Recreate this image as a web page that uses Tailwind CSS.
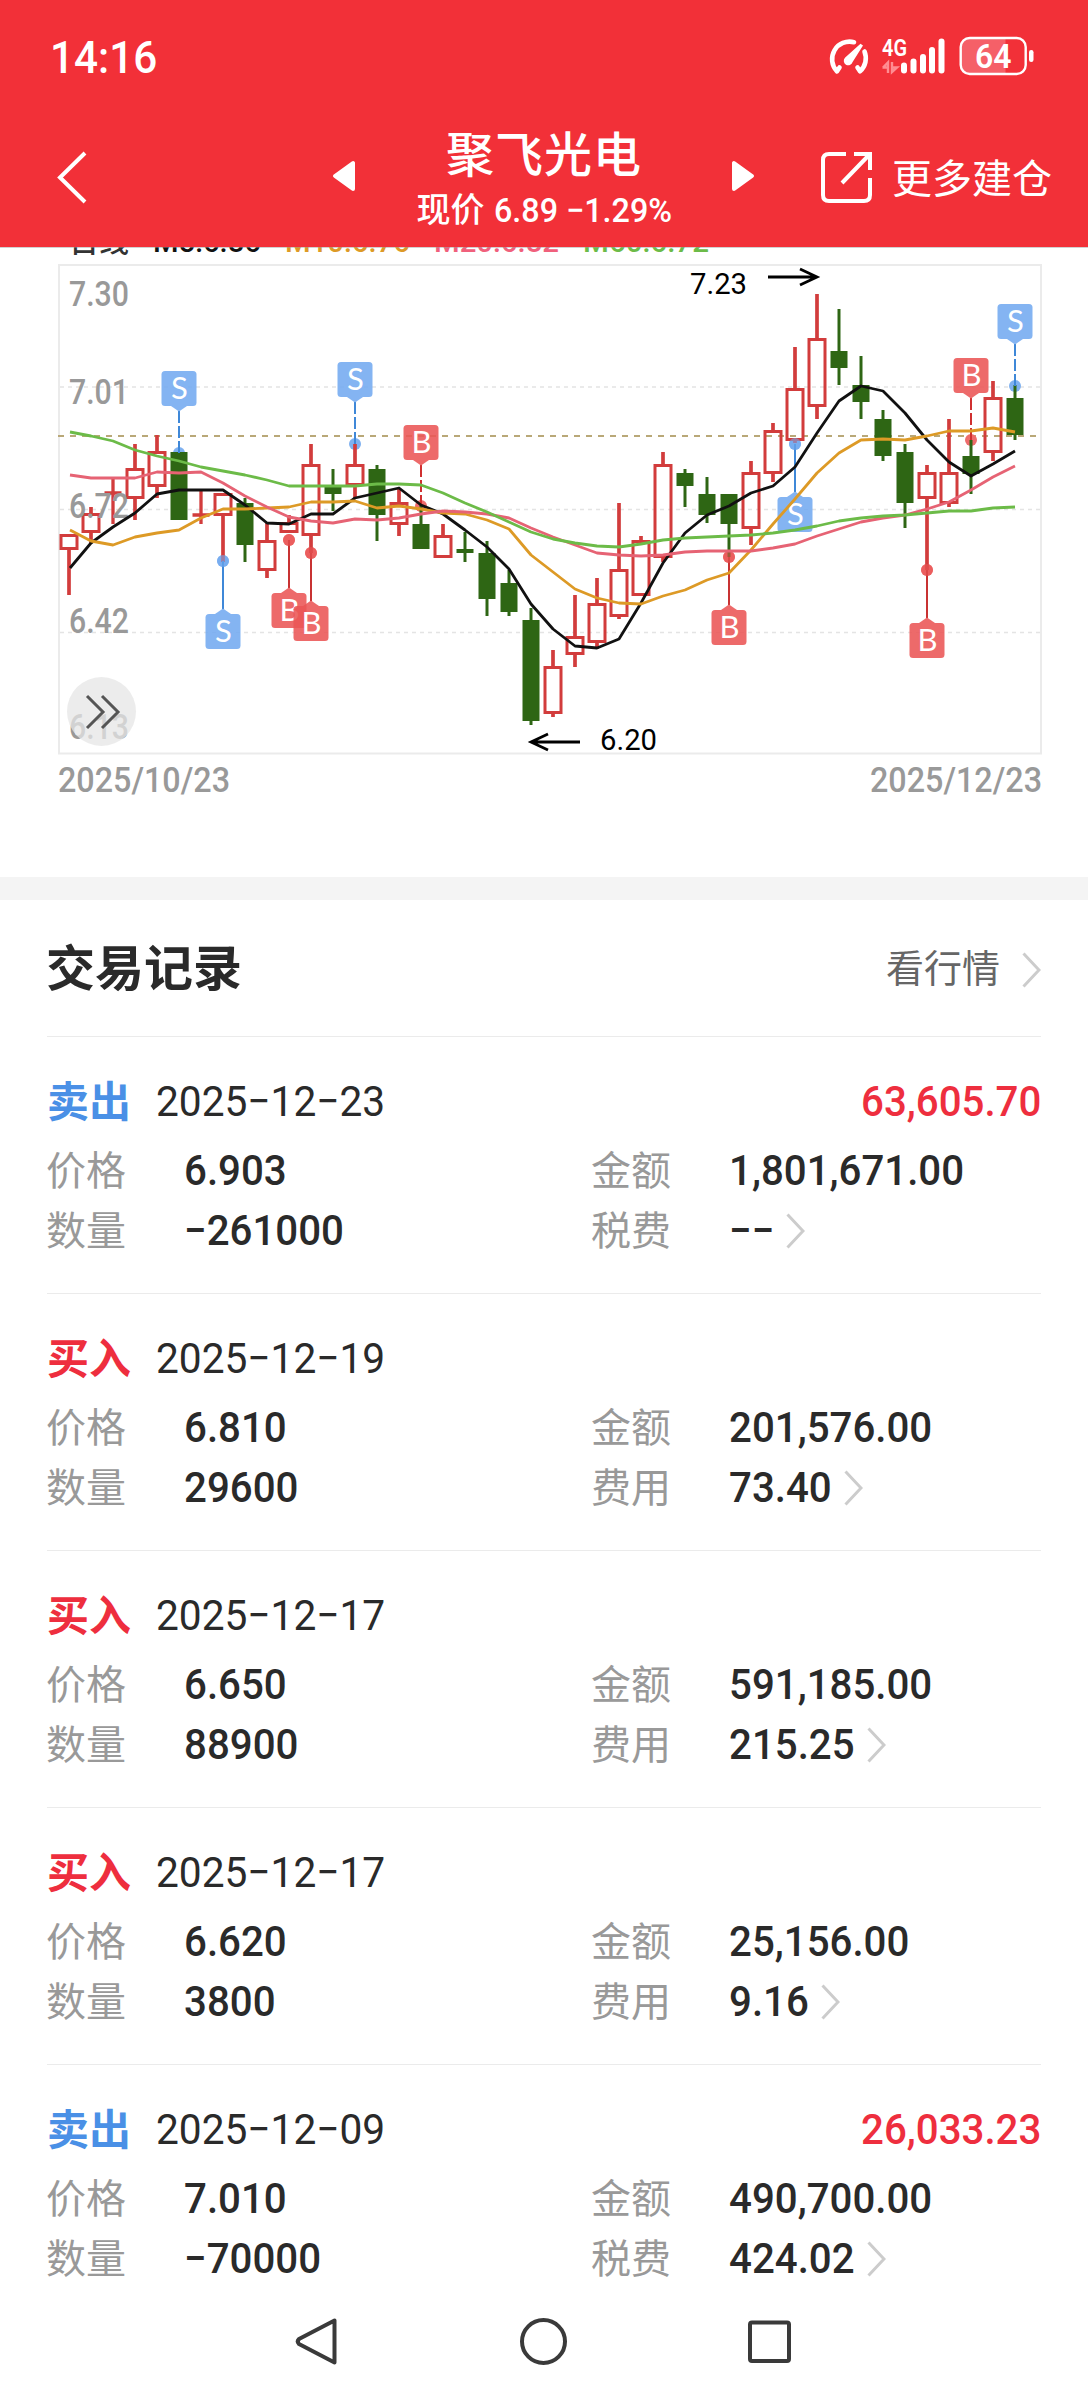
<!DOCTYPE html>
<html lang="zh-CN">
<head>
<meta charset="utf-8">
<title>聚飞光电</title>
<script src="https://cdn.jsdelivr.net/npm/@tailwindcss/browser@4"></script>
</head>
<body class="w-[1088px] h-[2400px] overflow-hidden bg-white text-[#2a2a2a] font-['Roboto','Noto_Sans_CJK_SC',sans-serif] flex flex-col">

<header class="h-[247px] shrink-0 bg-[#f23038] text-white flex flex-col">
  <div class="h-[114px] flex items-center justify-between pl-[50px] pr-[53px]">
    <span class="text-[45px] leading-none font-medium scale-x-[.94] origin-left">14:16</span>
    <svg class="w-[208px] h-[46px]" viewBox="827 34 208 46" fill="none">
      <g stroke="#fff" stroke-width="4.600" stroke-linecap="round" stroke-linejoin="round">
        <path d="M854 42.200A17.500 17.500 0 0 0 837 71.300L839.500 67.500"/>
        <path d="M864.500 51.500A17.500 17.500 0 0 1 860 71.300L857.500 67.500"/>
      </g>
      <path d="M863 45.500 852.600 62A4.500 4.500 0 1 1 845.200 57.500L860.500 43.800Z" fill="#fff"/>
      <text x="882" y="56" font-size="23" font-weight="600" fill="#fff" textLength="25" lengthAdjust="spacingAndGlyphs">4G</text>
      <path d="M882.500 67.500H888V62.500L883 67.500M888 62.500V73M892 62V72L897 67.500H892" stroke="#ff8d92" stroke-width="2.400"/>
      <g fill="#fff"><rect x="901" y="62.500" width="6" height="11" rx="3"/><rect x="910.500" y="58.500" width="6" height="15" rx="3"/><rect x="920" y="54" width="6" height="19.500" rx="3"/><rect x="929" y="47" width="6" height="26.500" rx="3"/><rect x="938.500" y="38.500" width="6" height="35" rx="3"/></g>
      <path d="M969 38H1005.500V73.500H969Q961 73.500 961 65V46Q961 38 969 38Z" fill="#f56068"/>
      <rect x="960.700" y="38" width="65" height="36" rx="9" stroke="#fff" stroke-width="2.400"/>
      <rect x="1029" y="50" width="4.500" height="12" rx="2.200" fill="#fff"/>
      <text x="975" y="68" font-size="33" font-weight="600" fill="#fff" textLength="36.500" lengthAdjust="spacingAndGlyphs">64</text>
    </svg>
  </div>
  <div class="h-[133px] flex items-start pl-[55px] pr-[31px]">
    <svg class="w-[33px] h-[54px] mt-[36px] shrink-0" viewBox="0 0 33 54" fill="none" stroke="#fff" stroke-width="4"><path d="M30 3 5 27.500 30 52"/></svg>
    <svg class="w-[24px] h-[32px] ml-[244px] mt-[46px] shrink-0" viewBox="0 0 24 32"><path d="M3 16 21 3V29Z" fill="#fff" stroke="#fff" stroke-width="4" stroke-linejoin="round"/></svg>
    <div class="w-[262px] ml-[57px] flex flex-col items-center shrink-0">
      <div class="h-[60px] mt-[12px] text-[48px] leading-[60px] font-medium tracking-[1px] whitespace-nowrap">聚飞光电</div>
      <div class="h-[44px] mt-[2px] leading-[44px] font-medium flex items-center whitespace-nowrap"><span class="text-[34px]">现价</span><span class="ml-[9px] w-[178px] text-[34.500px] text-[34px]"><span class="inline-block scale-x-[.95] origin-left">6.89 −1.29%</span></span></div>
    </div>
    <svg class="w-[26px] h-[32px] ml-[55px] mt-[46px] shrink-0" viewBox="0 0 26 32"><path d="M4 3V29L22 16Z" fill="#fff" stroke="#fff" stroke-width="4" stroke-linejoin="round"/></svg>
    <svg class="w-[52px] h-[54px] ml-[64px] mt-[36px] shrink-0" viewBox="0 0 52 54" fill="none" stroke="#fff" stroke-width="4"><path d="M26 4H9Q3 4 3 10V45Q3 51 9 51H44Q50 51 50 45V28"/><path d="M34 4H50V20M49 5 22 33"/></svg>
    <div class="ml-[20px] mt-[41px] text-[40px] leading-[50px] whitespace-nowrap">更多建仓</div>
  </div>
</header>

<section class="h-[630px] shrink-0">
  <svg id="chart" class="w-[1088px] h-[630px] block" viewBox="0 247 1088 630" fill="none"></svg>
</section>
<div class="h-[23px] shrink-0 bg-[#f4f4f4]"></div>

<section class="px-[47px] shrink-0">
  <div class="h-[137px] pt-[3px] border-b border-[#ebebeb] flex items-center justify-between">
    <h2 class="-ml-px text-[49px] leading-none font-bold">交易记录</h2>
    <div class="flex items-center text-[38px] text-[#666] gap-[22px]"><span>看行情</span>
      <svg class="w-[19px] h-[36px]" viewBox="0 0 19 36" fill="none" stroke="#ccc" stroke-width="3"><path d="M1.500 1.500 17 18 1.500 34.500"/></svg></div>
  </div>
  <div id="records"></div>
</section>

<nav class="h-[112px] shrink-0 flex items-start justify-center bg-white">
  <svg class="w-[544px] h-[112px]" viewBox="272 2288 544 112" fill="none" stroke="#3a3a3a" stroke-width="4" stroke-linejoin="round">
    <path d="M334.500 2320.500V2362.500L299 2344Q296.500 2341.500 299 2339Z"/><circle cx="543.500" cy="2341.500" r="21.500"/><rect x="750" y="2322.500" width="39" height="38.500" rx="2"/>
  </svg>
</nav>

<script>
// Condensed numerals: the scaled box keeps its full width, so a negative end margin takes up the slack.
const advance = s => [...s].reduce((w, c) => w + (c === '.' ? 0.27 : c === ',' ? 0.2 : 0.565), 0);
const num = s => `<span class="inline-block origin-left scale-x-[.936] text-[43px] font-medium" style="margin-right:${(-advance(s) * 43 * 0.064).toFixed(1)}px">${s}</span>`;
const arrow = '<svg class="w-[19px] h-[36px] ml-[12px]" viewBox="0 0 19 36" fill="none" stroke="#ccc" stroke-width="3"><path d="M1.500 1.500 17 18 1.500 34.500"/></svg>';
const records = [
  ['卖出', '2025−12−23', '63,605.70', '6.903', '1,801,671.00', '−261000', '税费', '−−'],
  ['买入', '2025−12−19', '', '6.810', '201,576.00', '29600', '费用', '73.40'],
  ['买入', '2025−12−17', '', '6.650', '591,185.00', '88900', '费用', '215.25'],
  ['买入', '2025−12−17', '', '6.620', '25,156.00', '3800', '费用', '9.16'],
  ['卖出', '2025−12−09', '26,033.23', '7.010', '490,700.00', '−70000', '税费', '424.02'],
];
document.getElementById('records').innerHTML = records.map(([side, date, profit, price, amount, qty, feeName, fee], i) => `
  <article class="pt-[34px] ${i < 4 ? 'h-[257px] border-b border-[#ebebeb]' : 'h-[223px]'}">
    <div class="h-[60px] flex items-center leading-none">
      <span class="w-[109px] pt-[3px] text-[42px] font-bold ${side === '卖出' ? 'text-[#4a90e6]' : 'text-[#ee2e3e]'}">${side}</span>
      <span class="inline-block origin-left scale-x-[.945] text-[43px] font-[450]">${date}</span>
      <span class="ml-auto text-[#ee2e3e]">${num(profit)}</span>
    </div>
    <div class="mt-[9px] grid grid-cols-[137px_408px_137px_1fr] auto-rows-[60px] items-center leading-none text-[40px] text-[#999]">
      <span class="-ml-px pt-[4px]">价格</span><span class="pt-px text-[#2a2a2a]">${num(price)}</span>
      <span class="-ml-px pt-[4px]">金额</span><span class="pt-px text-[#2a2a2a]">${num(amount)}</span>
      <span class="-ml-px pt-[4px]">数量</span><span class="pt-px text-[#2a2a2a]">${num(qty)}</span>
      <span class="-ml-px pt-[4px]">${feeName}</span><span class="pt-px text-[#2a2a2a] flex items-center">${num(fee)}${arrow}</span>
    </div>
  </article>`).join('');

const X = i => 69 + 22 * i;
// kind (r = up, g = down), body top, body bottom, high, low
const candles = [
  'r 535 549 535 595','r 514 532 507 543','r 493 494 479 524','r 469 498 444 520','r 452 486 435 498','g 452 520 452 520',
  'r 515 516 491 524','r 494 515 494 562','g 503 545 498 562','r 541 570 523 578','r 523 532 515 532','r 465 535 444 553',
  'g 487 494 469 511','r 465 485 444 498','g 469 515 465 541','r 503 524 489 536','g 524 549 505 549','r 536 557 524 557',
  'g 549 553 532 562','g 553 599 541 616','g 583 612 570 616','g 620 721 608 725','r 667 713 650 717','r 637 654 595 667',
  'r 604 642 578 649','r 570 616 503 619','r 541 595 536 595','r 465 557 452 562','g 473 486 469 507','g 494 515 477 523',
  'g 494 524 494 557','r 473 528 461 545','r 431 473 423 482','r 389 440 347 443','r 339 406 294 419','g 351 368 309 385',
  'g 385 402 356 419','g 419 456 410 461','g 452 503 444 528','r 473 498 465 570','r 473 503 419 507','g 456 474 440 494',
  'r 398 452 381 461','g 398 435 385 440'];
const lines = {
  '#111': [568,543,527,513,494,490,490,490,505,523,524,514,514,498,493,488,505,514,530,547,569,604,629,646,648,639,603,563,533,515,506,493,486,467,433,401,386,391,413,440,462,476,464,451],
  '#dd9a26': [530,541,545,537,533,530,518,509,509,508,507,502,502,501,508,506,509,513,514,520,529,555,572,589,598,603,604,596,590,580,573,550,524,499,473,453,440,439,440,436,431,431,428,432],
  '#e66374': [475,478,478,478,472,473,472,483,496,507,517,521,523,519,520,518,514,511,512,514,518,528,537,545,553,555,556,555,552,551,551,551,548,544,536,529,522,518,515,509,502,490,477,466],
  '#6cbb48': [432,436,441,450,456,461,467,471,475,480,486,486,486,486,484,484,485,493,503,512,522,532,539,543,546,547,544,540,538,537,536,535,533,530,526,521,518,516,515,513,511,511,508,507],
};
// label, candle index, box top, anchor dot y
const marks = [['S',5,371,453],['S',7,614,561],['B',10,593,540],['B',11,606,553],['S',13,362,444],['B',16,425,506],['B',30,610,557],['S',33,497,444],['B',39,623,570],['B',41,358,440],['S',43,304,386]];
const txt = (x, y, w, s, c, size = 35, wt = 500) => `<text x="${x}" y="${y}" font-size="${size}" font-weight="${wt}" fill="${c}" textLength="${w}" lengthAdjust="spacingAndGlyphs">${s}</text>`;

let o = txt(69, 252, 60, '日线', '#333', 30) + txt(153, 252, 108, 'M5:6.86', '#111', 30) + txt(285, 252, 125, 'M10:6.76', '#dd9a26', 30) + txt(434, 252, 125, 'M20:6.82', '#f0607c', 30) + txt(583, 252, 126, 'M60:6.72', '#6cbb48', 30);
o += '<path d="M0 247.500H1088" stroke="#999" stroke-opacity=".45"/>';
o += '<rect x="59" y="265" width="982" height="488.500" stroke="#ebebeb" stroke-width="2"/>';
for (const y of [387, 509.5, 632.5]) o += `<path d="M60 ${y}H1040" stroke="#e4e4e4" stroke-width="1.500" stroke-dasharray="4 4"/>`;
o += '<path d="M58 436H1040" stroke="#b9a878" stroke-width="2" stroke-dasharray="6 6"/>';
for (const [l, i, t, d] of marks) o += `<circle cx="${X(i)}" cy="${d}" r="6" fill="${l === 'S' ? '#7fb1f0' : '#ee6c6c'}"/>`;
candles.forEach((c, i) => {
  const [k, t, b, h, w] = c.split(' '), x = X(i);
  if (k === 'g') o += `<path d="M${x} ${h}V${w}" stroke="#2e6614" stroke-width="3"/><rect x="${x - 8.5}" y="${t}" width="17" height="${b - t}" fill="#2e6614"/>`;
  else if (b - t < 3) o += `<path d="M${x} ${h}V${w}M${x - 8.5} ${t}H${x + 8.5}" stroke="#d23c3c" stroke-width="3.300"/>`;
  else o += `<path d="M${x} ${h}V${t}M${x} ${b}V${w}" stroke="#d23c3c" stroke-width="3.700"/><rect x="${x - 8}" y="${+t + .5}" width="16" height="${b - t - 1}" stroke="#d23c3c" stroke-width="3"/>`;
});
for (const [l, i, t, d] of marks) {
  const x = X(i), s = l === 'S', c = s ? '#73aaf0' : '#ea5555', above = t < d;
  const tip = above ? `M${x - 8} ${t + 35}L${x} ${t + 40.5}L${x + 8} ${t + 35}Z` : `M${x - 8} ${t}L${x} ${t - 5.5}L${x + 8} ${t}Z`;
  o += above ? `<path d="M${x} ${t + 40}V${d}" stroke="${s ? '#3f88d8' : '#d03030'}" stroke-width="2" stroke-dasharray="12 3"/>`
             : `<path d="M${x} ${d}V${t - 5}" stroke="${s ? '#3f88d8' : '#c83232'}" stroke-width="2"/><circle cx="${x}" cy="${d}" r="6" fill="${c}" fill-opacity=".6"/>`;
  o += `<g fill="${c}" fill-opacity=".88"><path d="${tip}"/><rect x="${x - 17.5}" y="${t}" width="35" height="35" rx="3.500"/></g><text x="${x + .5}" y="${t + 28}" text-anchor="middle" font-size="31" font-family="Lato" fill="#fff">${l}</text>`;
}
o += [['7.30', 306], ['7.01', 403.5], ['6.72', 517.5], ['6.42', 633], ['6.13', 738.5]].map(([s, y]) => txt(69, y, 60, s, '#999')).join('');
for (const [c, v] of Object.entries(lines)) o += `<polyline points="${v.map((y, i) => (X(i) + (i ? 0 : 1)) + ',' + y).join(' ')}" stroke="${c}" stroke-width="2.800" stroke-linejoin="round"/>`;
o += txt(58, 792, 172, '2025/10/23', '#999') + txt(870, 792, 172, '2025/12/23', '#999');
o += txt(690, 293.5, 57, '7.23', '#000', 30, 400) + txt(600, 749.5, 57, '6.20', '#000', 30, 400);
o += '<path d="M768 277H816M800 269 817 277 800 285M580 742H532M548 734 531 742 548 750" stroke="#000" stroke-width="2.800"/>';
o += '<circle cx="101.500" cy="711.500" r="34.500" fill="#e6e6e6" fill-opacity=".75"/><path d="M87 696 103 712 87 728M102 696 118 712 102 728" stroke="#555" stroke-width="3"/>';
document.getElementById('chart').innerHTML = o;
</script>
</body>
</html>
